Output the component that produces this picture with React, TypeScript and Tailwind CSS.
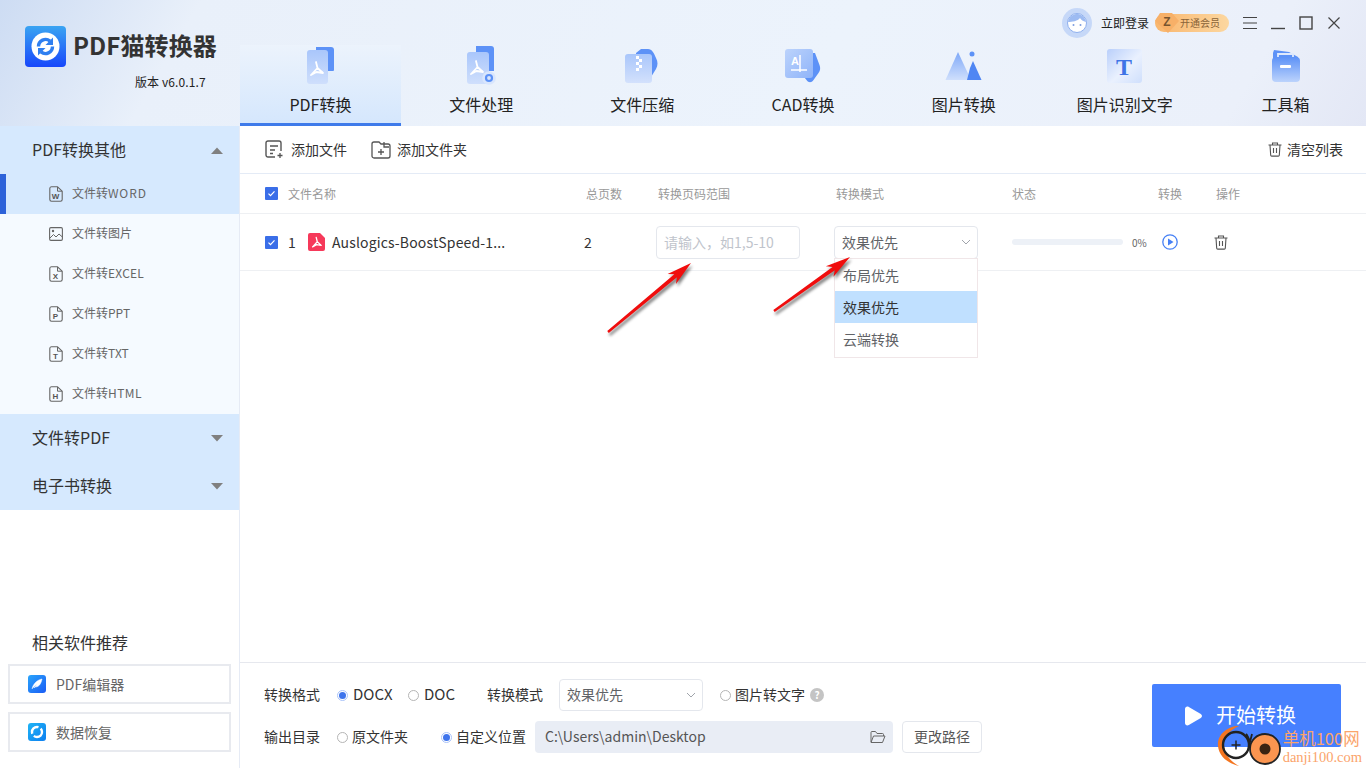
import React from "react";

const FONT = '"Noto Sans CJK SC","Liberation Sans",sans-serif';

function Acro({ x, y, s = 1, color = "#fff" }: { x: number; y: number; s?: number; color?: string }) {
  return (
    <g transform={`translate(${x} ${y}) scale(${s})`} fill="none" stroke={color} strokeWidth={1.8} strokeLinecap="round" strokeLinejoin="round">
      <path d="M0 -7 L1.5 -1 L-5 6 M1.5 -1 L7 4 L0.5 3 L-5 6" />
    </g>
  );
}

function IconPdf() {
  return (
    <svg width="40" height="42" viewBox="0 0 40 42">
      <defs>
        <linearGradient id="pf" x1="0" y1="0" x2="0" y2="1"><stop offset="0" stopColor="#a9c6fb" /><stop offset="1" stopColor="#cfdffc" /></linearGradient>
      </defs>
      <path d="M16 2h15a3 3 0 0 1 3 3v20a1 1 0 0 1-1 1H16z" fill="#5d92f7" />
      <rect x="7" y="5" width="21" height="34" rx="3" fill="url(#pf)" />
      <Acro x={16} y={24} s={1} />
    </svg>
  );
}
function IconProc() {
  return (
    <svg width="40" height="42" viewBox="0 0 40 42">
      <defs>
        <linearGradient id="pp" x1="0" y1="0" x2="0" y2="1"><stop offset="0" stopColor="#a9c6fb" /><stop offset="1" stopColor="#cfdffc" /></linearGradient>
      </defs>
      <path d="M15 1h15a3 3 0 0 1 3 3v22H15z" fill="#5d92f7" />
      <rect x="6" y="7" width="22" height="32" rx="3" fill="url(#pp)" />
      <Acro x={15} y={23} />
      <circle cx="28" cy="33" r="6.800" fill="#d9e6fd" />
      <circle cx="28" cy="33" r="3" fill="none" stroke="#5d92f7" strokeWidth="2.200" />
    </svg>
  );
}
function IconZip() {
  return (
    <svg width="44" height="42" viewBox="0 0 44 42">
      <defs>
        <linearGradient id="pz" x1="0" y1="0" x2="0" y2="1"><stop offset="0" stopColor="#a9c6fb" /><stop offset="1" stopColor="#d3e1fc" /></linearGradient>
      </defs>
      <path d="M16 8l5-4h7c4 0 6 4 8 9 2 4 2 7 0 11l-5 8H16z" fill="#5d92f7" />
      <rect x="5" y="9" width="27" height="29" rx="3" fill="url(#pz)" />
      <g fill="#fff">
        <rect x="16" y="11" width="3" height="3" /><rect x="19" y="14" width="3" height="3" /><rect x="16" y="17" width="3" height="3" /><rect x="19" y="20" width="3" height="3" /><rect x="16" y="23" width="3" height="3" />
      </g>
    </svg>
  );
}
function IconCad() {
  return (
    <svg width="44" height="42" viewBox="0 0 44 42">
      <defs>
        <linearGradient id="pc" x1="0" y1="0" x2="1" y2="1"><stop offset="0" stopColor="#bcd3fc" /><stop offset="1" stopColor="#8fb4f9" /></linearGradient>
      </defs>
      <path d="M22 8h12l4.500 12c1 3 1 5-1 8l-5 7c-2 3-5 3-7 0l-4-5z" fill="#5d92f7" />
      <rect x="4" y="4" width="28" height="29" rx="3" fill="url(#pc)" />
      <text x="10" y="20" fontSize="11" fill="#fff" fontFamily="Liberation Sans" fontWeight="bold">A</text>
      <path d="M19 10v17M10 25h16" stroke="#fff" strokeWidth="1.500" />
    </svg>
  );
}
function IconImg() {
  return (
    <svg width="44" height="42" viewBox="0 0 44 42">
      <defs>
        <linearGradient id="pi" x1="0.5" y1="0" x2="0.5" y2="1"><stop offset="0" stopColor="#7ea8f8" /><stop offset="1" stopColor="#cfdffc" /></linearGradient>
      </defs>
      <path d="M16 7l13 28H3.500z" fill="url(#pi)" />
      <circle cx="30" cy="9" r="2.500" fill="#5d92f7" />
      <path d="M31 16l8.500 19H25l3-12z" fill="#4f86f3" />
    </svg>
  );
}
function IconOcr() {
  return (
    <svg width="44" height="42" viewBox="0 0 44 42">
      <defs>
        <linearGradient id="po" x1="0" y1="0" x2="1" y2="1"><stop offset="0" stopColor="#b9cffb" /><stop offset="0.55" stopColor="#eaf1fe" /><stop offset="1" stopColor="#cfdffc" /></linearGradient>
      </defs>
      <rect x="4" y="4" width="35" height="34" rx="3" fill="url(#po)" />
      <text x="21" y="30" textAnchor="middle" fontSize="24" fontWeight="bold" fill="#3f74e6" fontFamily="Liberation Serif">T</text>
    </svg>
  );
}
function IconBox() {
  return (
    <svg width="40" height="42" viewBox="0 0 40 42">
      <defs>
        <linearGradient id="pb" x1="0" y1="0" x2="0" y2="1"><stop offset="0" stopColor="#5d92f7" /><stop offset="1" stopColor="#bcd3fc" /></linearGradient>
      </defs>
      <path d="M7 8l1-3 15 2 9 5v2H7z" fill="#5d92f7" />
      <path d="M12 13V9h15v4" fill="none" stroke="#dfe9fc" strokeWidth="1.800" />
      <rect x="6" y="12" width="28" height="25" rx="4" fill="url(#pb)" />
      <rect x="14" y="20" width="11" height="3" rx="1" fill="#fff" />
    </svg>
  );
}

function Logo() {
  return (
    <svg width="41" height="41" viewBox="0 0 41 41" className="shrink-0">
      <defs>
        <linearGradient id="lg" x1="0.5" y1="0" x2="0.5" y2="1"><stop offset="0" stopColor="#3aa4f2" /><stop offset="1" stopColor="#1747fb" /></linearGradient>
      </defs>
      <rect width="41" height="41" rx="4" fill="url(#lg)" />
      <circle cx="20.500" cy="20.500" r="14" fill="#fff" />
      <path d="M13.500 20.500a7 7 0 0 1 11.500-5.400" fill="none" stroke="#2f7ff0" strokeWidth="3.400" />
      <path d="M27.500 20.500a7 7 0 0 1-11.500 5.400" fill="none" stroke="#2f7ff0" strokeWidth="3.400" />
      <path d="M28 11.500v7.500h-7.500z" fill="#2f7ff0" />
      <path d="M13 29.500v-7.500h7.500z" fill="#2f7ff0" />
    </svg>
  );
}

function FileIcon({ l }: { l: string }) {
  return (
    <svg width="14" height="16" viewBox="0 0 14 16" className="shrink-0">
      <path d="M2.500 0.800h6l4.700 4.400v8.300a1.700 1.700 0 0 1-1.700 1.700h-9a1.700 1.700 0 0 1-1.700-1.700v-11a1.700 1.700 0 0 1 1.700-1.700z" fill="none" stroke="#666" strokeWidth="1.100" />
      <path d="M8.500 1v4.200h4.500" fill="none" stroke="#666" strokeWidth="1" />
      <text x="6.500" y="12.800" fontSize="8" fontWeight="bold" textAnchor="middle" fill="#555" fontFamily="Liberation Sans">{l}</text>
    </svg>
  );
}
function PicIcon() {
  return (
    <svg width="14" height="14" viewBox="0 0 14 14" className="shrink-0">
      <rect x="0.600" y="0.600" width="12.800" height="12.800" rx="1.300" fill="none" stroke="#666" strokeWidth="1.100" />
      <circle cx="4" cy="4" r="1.200" fill="#666" />
      <path d="M1 11l3.500-3.500 2.500 2.500 3-3 3.400 3" fill="none" stroke="#666" strokeWidth="1" />
    </svg>
  );
}

function Caret({ up }: { up?: boolean }) {
  return (
    <svg width="12" height="7" viewBox="0 0 12 7" className="shrink-0">
      <path d={up ? "M6 0.500L12 7H0z" : "M6 6.500L0 0h12z"} fill="#808080" />
    </svg>
  );
}

function Check() {
  return (
    <span className="flex h-[13px] w-[13px] shrink-0 items-center justify-center rounded-[1px] bg-[#3a6ee8]">
      <svg width="9" height="9" viewBox="0 0 9 9"><path d="M1.500 4.700l2 2 4-4.400" fill="none" stroke="#fff" strokeWidth="1.200" /></svg>
    </span>
  );
}

function Radio({ on }: { on?: boolean }) {
  return on ? (
    <span className="flex h-[11px] w-[11px] shrink-0 items-center justify-center rounded-full border border-[#a9c3fa] bg-white">
      <span className="h-[7px] w-[7px] rounded-full bg-[#3e74ec]" />
    </span>
  ) : (
    <span className="h-[11px] w-[11px] shrink-0 rounded-full border border-[#b5b5b5] bg-white" />
  );
}

function Chevron() {
  return (
    <svg width="10" height="6" viewBox="0 0 10 6" className="shrink-0"><path d="M1 1l4 4 4-4" fill="none" stroke="#a0a4ab" strokeWidth="1" /></svg>
  );
}

function Trash({ c = "#555", s = 14 }: { c?: string; s?: number }) {
  return (
    <svg width={s} height={s + 1} viewBox="0 0 14 15" className="shrink-0">
      <path d="M0.500 3h13M4.500 3V1h5v2M2 3l.7 10.200a1 1 0 0 0 1 .9h6.600a1 1 0 0 0 1-.9L12 3M5.500 6v5M8.500 6v5" fill="none" stroke={c} strokeWidth="1.100" />
    </svg>
  );
}

const tabs: [string, React.ReactNode][] = [
  ["PDF转换", <IconPdf />],
  ["文件处理", <IconProc />],
  ["文件压缩", <IconZip />],
  ["CAD转换", <IconCad />],
  ["图片转换", <IconImg />],
  ["图片识别文字", <IconOcr />],
  ["工具箱", <IconBox />],
];

const side: [string, string, React.ReactNode, boolean?][] = [
  ["文件转", "WORD", <FileIcon l="W" />, true],
  ["文件转", "图片", <PicIcon />],
  ["文件转", "EXCEL", <FileIcon l="X" />],
  ["文件转", "PPT", <FileIcon l="P" />],
  ["文件转", "TXT", <FileIcon l="T" />],
  ["文件转", "HTML", <FileIcon l="H" />],
];

const COLS = "grid grid-cols-[346px_72px_178px_176px_146px_58px_1fr] items-center";

function Arrow({ x1, y1, x2, y2 }: { x1: number; y1: number; x2: number; y2: number }) {
  const a = Math.atan2(y2 - y1, x2 - x1);
  const deg = (a * 180) / Math.PI;
  const len = Math.hypot(x2 - x1, y2 - y1);
  const body = (fill: string) => (
    <g transform={`translate(${x1} ${y1}) rotate(${deg})`} fill={fill}>
      <path d={`M0 -1.200L${len - 20} -2L${len - 25} -6.500L${len} 0L${len - 25} 6.500L${len - 20} 2L0 1.200z`} />
    </g>
  );
  return (
    <>
      <g transform="translate(1.500 3)" opacity="0.5" style={{ filter: "blur(1.5px)" }}>{body("#000")}</g>
      {body("#f00d0d")}
    </>
  );
}

export default function App() {
  return (
    <div className="relative flex h-screen w-full flex-col overflow-hidden bg-white text-[#333]" style={{ fontFamily: FONT }}>
      {/* header */}
      <header className="relative flex h-[126px] shrink-0 bg-[linear-gradient(120deg,#cddcf3_0%,#e9f0fa_14%,#ecf3fc_60%,#ebf0fa_90%,#e3e7f5_100%)]">
        <div className="w-[240px] shrink-0 pl-[25px] pt-[26px]">
          <div className="flex h-[41px] items-center gap-[7px]">
            <Logo />
            <span className="pb-[3px] text-[24px] font-bold leading-[36px] tracking-[0.1px] text-[#333]">PDF猫转换器</span>
          </div>
          <div className="mt-[7px] pl-[110px] text-[12px] leading-[16px] tracking-[0.1px] text-[#222]">版本 v6.0.1.7</div>
        </div>
        <nav className="flex flex-1 pt-[45px]">
          {tabs.map(([t, ic], i) => (
            <div
              key={t}
              className={
                i === 0
                  ? "flex h-[81px] flex-1 flex-col items-center border-b-[3px] border-[#3f7bea] bg-gradient-to-b from-[#ecf3fc] to-[#d5e7fd]"
                  : "flex h-[81px] flex-1 flex-col items-center border-b-[3px] border-transparent"
              }
            >
              <div className="flex h-[42px] items-center justify-center">{ic}</div>
              <div className="mt-[5px] text-[16px] leading-[24px] text-[#222]">{t}</div>
            </div>
          ))}
        </nav>
        <div className="absolute right-[25px] top-[8px] flex items-center">
          <svg width="30" height="30" viewBox="0 0 30 30" className="mr-[9px]">
            <circle cx="15" cy="15" r="15" fill="#c6d8f8" />
            <circle cx="15" cy="15" r="9.500" fill="#fff" stroke="#8fb0ee" strokeWidth="1" />
            <path d="M6 14c1-6 6-8 9-8s8 2 9 8c-3-1-5-2-6-4-2 3-8 4-12 4z" fill="#9dbbf2" />
            <circle cx="11.500" cy="17" r="1" fill="#7d9ee0" /><circle cx="18.500" cy="17" r="1" fill="#7d9ee0" />
          </svg>
          <span className="mr-[6px] text-[12px] leading-[16px] text-[#222]">立即登录</span>
          <div className="relative mr-[14px] flex h-[18px] w-[74px] items-center justify-end rounded-full bg-gradient-to-r from-[#f9b66d] to-[#fcd7a0] pr-[9px] text-[10px] leading-[18px] text-[#8a6338]">
            开通会员
            <svg width="26" height="22" viewBox="0 0 26 22" className="absolute -left-[1px] -top-[2px]">
              <path d="M6 1h12l7 8-11 12L1 9z" fill="#f7b068" />
              <text x="13" y="14" textAnchor="middle" fontSize="12" fontWeight="bold" fill="#77552f" fontFamily="Liberation Sans">Z</text>
            </svg>
          </div>
          <div className="flex items-center gap-[14px]">
            <svg width="14" height="14" viewBox="0 0 14 14"><path d="M0 1.500h14M0 7h14M0 12.500h14" stroke="#444" strokeWidth="1.100" /></svg>
            <svg width="14" height="14" viewBox="0 0 14 14"><path d="M0 12.500h14" stroke="#444" strokeWidth="1.400" /></svg>
            <svg width="14" height="14" viewBox="0 0 14 14"><rect x="1" y="1" width="12" height="12" fill="none" stroke="#444" strokeWidth="1.400" /></svg>
            <svg width="14" height="14" viewBox="0 0 14 14"><path d="M1.500 1.500l11 11M12.500 1.500l-11 11" stroke="#444" strokeWidth="1.200" /></svg>
          </div>
        </div>
      </header>

      <div className="flex min-h-0 flex-1">
        {/* sidebar */}
        <aside className="flex w-[240px] shrink-0 flex-col border-r border-[#e6ebf5]">
          <div className="flex h-[48px] items-center justify-between bg-[#d6e9fe] pl-[32px] pr-[16px] text-[16px] text-[#333]">
            <span className="pb-[2px]">PDF转换其他</span><Caret up />
          </div>
          <div className="bg-[#f5faff]">
            {side.map(([t, u, ic, act]) => (
              <div
                key={u}
                className={
                  act
                    ? "flex h-[40px] items-center gap-[9px] border-l-[6px] border-[#2d62d9] bg-[#d6e9fe] pl-[43px] text-[12px] text-[#666]"
                    : "flex h-[40px] items-center gap-[9px] pl-[49px] text-[12px] text-[#666]"
                }
              >
                <span className="flex w-[14px] justify-center">{ic}</span>
                <span className="pb-[2px]">
                  {t}
                  <span className={u === "WORD" ? "tracking-[0.9px]" : u === "HTML" ? "tracking-[0.4px]" : u === "EXCEL" ? "tracking-[0.2px]" : "tracking-normal"}>{u}</span>
                </span>
              </div>
            ))}
          </div>
          <div className="flex h-[48px] items-center justify-between bg-[#d6e9fe] pl-[32px] pr-[16px] text-[16px] text-[#333]">
            <span className="pb-[2px]">文件转PDF</span><Caret />
          </div>
          <div className="flex h-[48px] items-center justify-between bg-[#d6e9fe] pl-[32px] pr-[16px] text-[16px] text-[#333]">
            <span className="pb-[2px]">电子书转换</span><Caret />
          </div>
          <div className="mt-auto px-[8px] pb-[16px]">
            <div className="mb-[10px] pl-[24px] text-[16px] leading-[24px] text-[#333]">相关软件推荐</div>
            <div className="mb-[8px] flex h-[40px] items-center gap-[10px] border-2 border-[#e8eaef] pl-[18px] text-[14px] text-[#666]">
              <svg width="18" height="18" viewBox="0 0 18 18">
                <defs><linearGradient id="ed" x1="0" y1="0" x2="1" y2="1"><stop offset="0" stopColor="#2aa5fb" /><stop offset="1" stopColor="#1a5cf5" /></linearGradient></defs>
                <rect width="18" height="18" rx="3" fill="url(#ed)" />
                <path d="M4 14c1-5 5-9 10-10-1 5-3 8-7 8l-1 1 3-4" fill="#fff" stroke="#fff" strokeWidth=".5" />
              </svg>
              <span>PDF编辑器</span>
            </div>
            <div className="flex h-[40px] items-center gap-[10px] border-2 border-[#e8eaef] pl-[18px] text-[14px] text-[#666]">
              <svg width="18" height="18" viewBox="0 0 18 18">
                <defs><linearGradient id="rc" x1="0" y1="0" x2="1" y2="1"><stop offset="0" stopColor="#1fb4f5" /><stop offset="1" stopColor="#0e7ff0" /></linearGradient></defs>
                <rect width="18" height="18" rx="3" fill="url(#rc)" />
                <circle cx="9" cy="9" r="5" fill="none" stroke="#fff" strokeWidth="2.400" strokeDasharray="11 2.500" />
              </svg>
              <span>数据恢复</span>
            </div>
          </div>
        </aside>

        {/* main */}
        <main className="flex min-w-0 flex-1 flex-col">
          <div className="flex h-[48px] shrink-0 items-center border-b border-[#e4ebf6] pl-[25px] pr-[23px] text-[14px] text-[#333]">
            <svg width="19" height="19" viewBox="0 0 19 19" className="mr-[7px]">
              <path d="M10 17H3a2 2 0 0 1-2-2V3a2 2 0 0 1 2-2h11a2 2 0 0 1 2 2v8" fill="none" stroke="#555" strokeWidth="1.400" />
              <path d="M5 6h8M5 10h5M5 13.500h3M15 13v5M12.500 15.500h5" stroke="#555" strokeWidth="1.300" fill="none" />
            </svg>
            <span>添加文件</span>
            <svg width="20" height="18" viewBox="0 0 20 18" className="ml-[24px] mr-[6px]">
              <path d="M3 1h5l2 2h7a2 2 0 0 1 2 2v10a2 2 0 0 1-2 2H3a2 2 0 0 1-2-2V3a2 2 0 0 1 2-2zM13 1v5h5" fill="none" stroke="#555" strokeWidth="1.300" />
              <path d="M10 8v6M7 11h6" stroke="#555" strokeWidth="1.300" />
            </svg>
            <span>添加文件夹</span>
            <div className="ml-auto flex items-center gap-[5px]">
              <Trash c="#555" s={14} />
              <span>清空列表</span>
            </div>
          </div>

          <div className={`${COLS} h-[40px] shrink-0 border-b border-[#eef0f3] text-[12px] text-[#999]`}>
            <div className="flex items-center pl-[25px]"><Check /><span className="ml-[10px]">文件名称</span></div>
            <div>总页数</div>
            <div>转换页码范围</div>
            <div>转换模式</div>
            <div>状态</div>
            <div>转换</div>
            <div>操作</div>
          </div>

          <div className={`${COLS} relative h-[57px] shrink-0 border-b border-[#eef0f3] text-[14px] text-[#333]`}>
            <div className="flex items-center pl-[25px]">
              <Check />
              <span className="ml-[10px] w-[20px]">1</span>
              <svg width="17" height="18" viewBox="0 0 17 18" className="shrink-0">
                <path d="M2 0h10l5 5v11a2 2 0 0 1-2 2H2a2 2 0 0 1-2-2V2a2 2 0 0 1 2-2z" fill="#f6395a" />
                <Acro x={8.200} y={9.500} s={0.720} />
              </svg>
              <span className="ml-[7px] whitespace-nowrap tracking-[0.15px]">Auslogics-BoostSpeed-1...</span>
            </div>
            <div className="-ml-[2px]">2</div>
            <div className="-ml-[2px]">
              <div className="flex h-[33px] w-[144px] items-center rounded-[4px] border border-[#e4e7ed] pl-[7px] text-[14px] text-[#c0c4cc]">请输入，如1,5-10</div>
            </div>
            <div className="-ml-[2px]">
              <div className="flex h-[33px] w-[144px] items-center justify-between rounded-[4px] border border-[#e4e7ed] pl-[7px] pr-[6px] text-[14px] text-[#606266]">
                效果优先<Chevron />
              </div>
            </div>
            <div className="flex items-center">
              <div className="h-[6px] w-[111px] rounded-full bg-[#edf1f7]" />
              <span className="ml-[9px] text-[10px] text-[#666]">0%</span>
            </div>
            <div className="pl-[4px]">
              <svg width="16" height="16" viewBox="0 0 16 16" className="block">
                <circle cx="8" cy="8" r="7.200" fill="none" stroke="#4680f5" strokeWidth="1.300" />
                <path d="M6 4.500L11.500 8 6 11.500z" fill="#4680f5" />
              </svg>
            </div>
            <div className="-ml-[2px]">
              <Trash c="#555" s={14} />
            </div>
          </div>

          <div className="relative min-h-0 flex-1" />

          {/* bottom */}
          <div className="flex h-[106px] shrink-0 border-t border-[#e6e8ee] pl-[24px] text-[14px] text-[#333]">
            <div className="flex flex-col pt-[16px]">
              <div className="flex h-[32px] items-center">
                <span className="w-[73px] pb-[2px]">转换格式</span>
                <Radio on /><span className="ml-[5px] w-[55px] pb-[2px] text-[15px]">DOCX</span>
                <Radio /><span className="ml-[5px] w-[63px] pb-[2px] text-[15px]">DOC</span>
                <span className="w-[72px] pb-[2px]">转换模式</span>
                <div className="flex h-[32px] w-[144px] items-center justify-between rounded-[4px] border border-[#e4e7ed] pl-[7px] pr-[6px] text-[#606266]"><span className="pb-[1px]">效果优先</span><Chevron /></div>
                <span className="ml-[17px] flex"><Radio /></span>
                <span className="ml-[4px] pb-[2px]">图片转文字</span>
                <span className="ml-[5px] flex h-[14px] w-[14px] items-center justify-center rounded-full bg-[#c4c4c4] text-[10px] font-bold leading-none text-white">?</span>
              </div>
              <div className="mt-[10px] flex h-[32px] items-center">
                <span className="w-[73px] pb-[2px]">输出目录</span>
                <Radio /><span className="ml-[4px] w-[89px] pb-[2px]">原文件夹</span>
                <Radio on /><span className="ml-[4px] w-[79px] pb-[2px]">自定义位置</span>
                <div className="flex h-[32px] w-[358px] items-center justify-between rounded-[4px] bg-[#e9edf5] pl-[10px] pr-[7px] text-[#555]">
                  <span className="pb-[1px]">C:\Users\admin\Desktop</span>
                  <svg width="16" height="14" viewBox="0 0 16 14"><path d="M1 12V2.500a1 1 0 0 1 1-1h3.500l1.500 2h5.500a1 1 0 0 1 1 1V6M1 12.500L3.500 6H15l-2.500 6.500z" fill="none" stroke="#666" strokeWidth="1" /></svg>
                </div>
                <div className="ml-[9px] flex h-[32px] w-[80px] items-center justify-center rounded-[4px] border border-[#e4e7ed] pb-[1px] text-[#555]">更改路径</div>
              </div>
            </div>
            <div className="ml-auto mr-[25px] mt-[21px] flex h-[63px] w-[189px] items-center rounded-[2px] bg-[#4680ff] pl-[31px] text-[20px] text-white">
              <svg width="20" height="20" viewBox="0 0 20 20" className="mr-[13px]"><path d="M2 3c0-2 2-3 3.800-2l12 7c1.600 1 1.600 3 0 4l-12 7C4 20 2 19 2 17z" fill="#fff" /></svg>
              <span className="pb-[2px]">开始转换</span>
            </div>
          </div>
        </main>
      </div>

      {/* dropdown overlay */}
      <div className="absolute left-[834px] top-[258px] w-[144px] border border-[#f0e6e8] bg-white pb-px text-[14px] text-[#606266]">
        <div className="flex h-[32px] items-center pl-[8px]">布局优先</div>
        <div className="flex h-[32px] items-center bg-[#c0e0ff] pl-[8px] text-[#333]">效果优先</div>
        <div className="flex h-[33px] items-center pl-[8px]">云端转换</div>
      </div>

      {/* annotation arrows */}
      <svg className="pointer-events-none absolute left-0 top-0" width="1366" height="768">
        <Arrow x1={608} y1={332} x2={691} y2={263} />
        <Arrow x1={774} y1={311} x2={850} y2={257} />
      </svg>

      {/* watermark */}
      <div className="pointer-events-none absolute bottom-0 right-[4px] flex items-end">
        <svg width="67" height="52" viewBox="0 0 67 52" className="-mr-[1px]">
          <path d="M22 10C10 10 0 19 1 30c1 10 9 17 21 20-7-4-14-10-15-20C6 21 13 14 22 10z" fill="#f4751f" />
          <circle cx="19" cy="29" r="13" fill="none" stroke="#222" strokeWidth="2.400" />
          <path d="M14.500 29h9M19 24.500v9" stroke="#222" strokeWidth="1.500" />
          <path d="M29 18c2 2 3 5 4 8l2-8" fill="none" stroke="#222" strokeWidth="1.800" />
          <circle cx="48" cy="33" r="15" fill="#fb9550" stroke="#222" strokeWidth="1.800" />
          <circle cx="48" cy="33" r="5.500" fill="#3a2412" />
        </svg>
        <div className="flex flex-col items-start pb-[2px] text-[#fba46b]">
          <span className="text-[16.500px] leading-[22px]" style={{ fontFamily: '"Noto Sans CJK SC",serif' }}>单机100网</span>
          <span className="text-[14.500px] leading-[17px]" style={{ fontFamily: '"Liberation Serif",serif' }}>danji100.com</span>
        </div>
      </div>
    </div>
  );
}
